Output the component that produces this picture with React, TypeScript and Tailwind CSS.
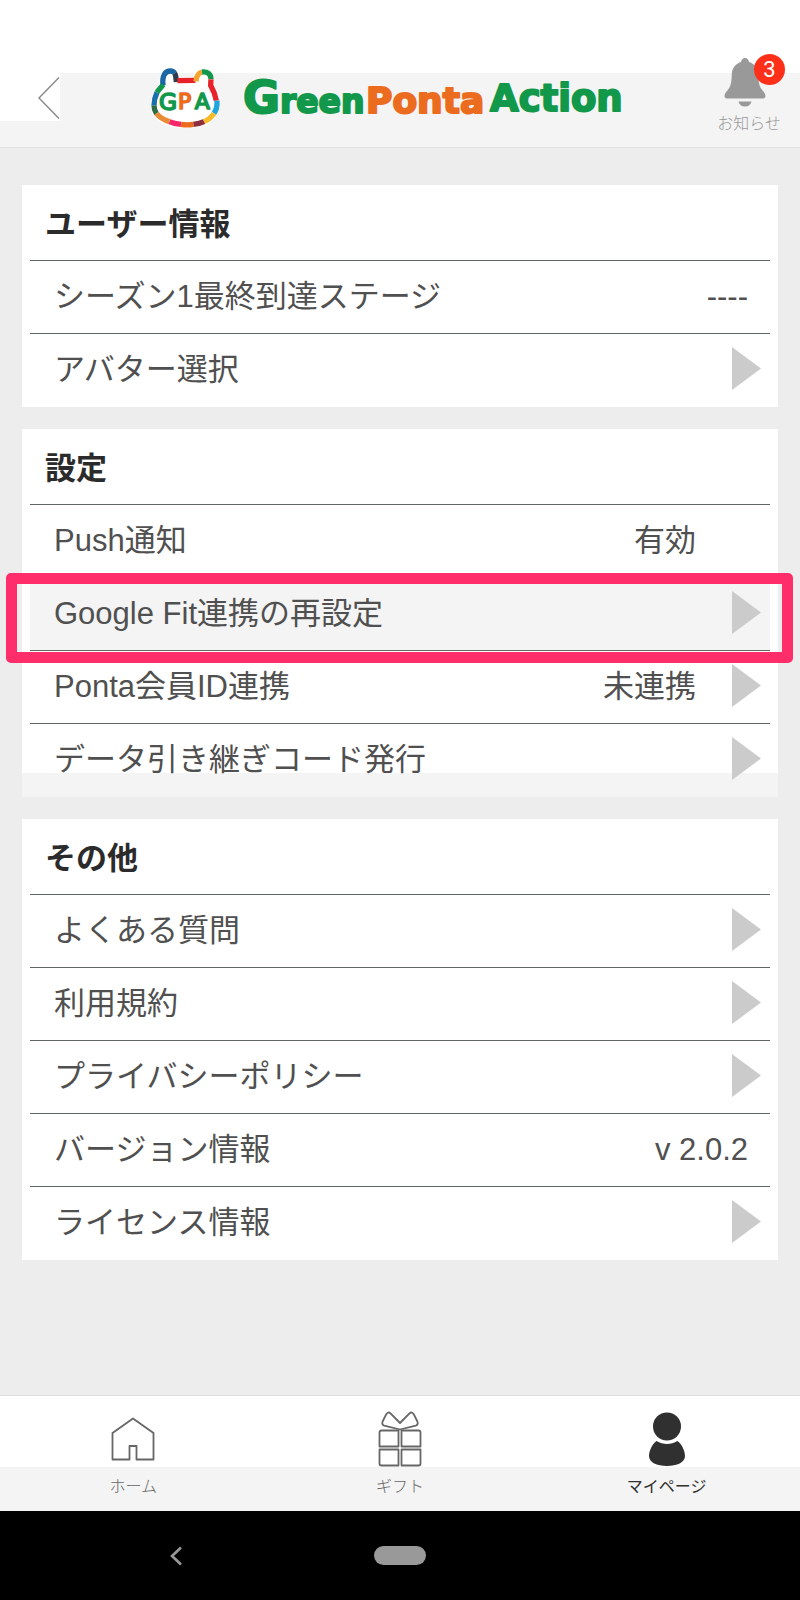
import type { ReactNode } from 'react';

interface RowItem {
  label: string;
  value?: string;
  arrow?: boolean;
  // 矢印なしでも値の位置を矢印つきの行に揃える
  reserveArrow?: boolean;
  highlighted?: boolean;
  shaded?: boolean;
}

interface Section {
  title: string;
  rows: RowItem[];
}

const sections: Section[] = [
  {
    title: 'ユーザー情報',
    rows: [
      { label: 'シーズン1最終到達ステージ', value: '----' },
      { label: 'アバター選択', arrow: true },
    ],
  },
  {
    title: '設定',
    rows: [
      { label: 'Push通知', value: '有効', reserveArrow: true },
      { label: 'Google Fit連携の再設定', arrow: true, highlighted: true },
      { label: 'Ponta会員ID連携', value: '未連携', arrow: true },
      { label: 'データ引き継ぎコード発行', arrow: true, shaded: true },
    ],
  },
  {
    title: 'その他',
    rows: [
      { label: 'よくある質問', arrow: true },
      { label: '利用規約', arrow: true },
      { label: 'プライバシーポリシー', arrow: true },
      { label: 'バージョン情報', value: 'v 2.0.2' },
      { label: 'ライセンス情報', arrow: true },
    ],
  },
];

export default function App() {
  return (
    <div className="flex min-h-screen flex-col bg-[#ededed] font-['Liberation_Sans','Noto_Sans_CJK_JP',sans-serif] text-[#505050]">
      <Header />
      <main className="flex flex-1 flex-col gap-[22px] px-[22px] pt-[37px] pb-8">
        {sections.map((section) => (
          <SettingsCard key={section.title} section={section} />
        ))}
      </main>
      <TabBar />
      <SystemBar />
    </div>
  );
}

function Header() {
  return (
    <header className="flex h-[148px] items-start justify-between border-b border-[#e0e0e0] bg-linear-to-b from-white from-50% to-[#f4f4f4] to-50%">
      <button aria-label="戻る" className="flex h-[121px] w-[60px] items-end justify-end bg-white pb-[2px]">
        <svg width="22" height="42" viewBox="0 0 22 42" fill="none" stroke="#8c8c8c" strokeWidth="1.5">
          <path d="M21 0.5 L1 21 L21 41.5" />
        </svg>
      </button>
      <h1 className="flex items-start gap-[14px] pt-[60px] pl-2">
        <BearLogo />
        <WordMark />
      </h1>
      <button className="flex w-[102px] flex-col items-center pt-[58px] text-[#999999]">
        <span className="relative mr-2">
          <svg width="42" height="49" viewBox="0 0 42 49" fill="#999999">
            <path d="M21 0 C23 0 24.4 1.6 25 4 C31 6 34 10.5 34.2 16.5 C34.4 25 35.4 29 38.6 32.4 C40.6 34.6 41.5 36 41.5 38 C41.5 39.8 40 40.6 38 40.6 H4 C2 40.6 0.5 39.8 0.5 38 C0.5 36 1.4 34.6 3.4 32.4 C6.6 29 7.6 25 7.8 16.5 C8 10.5 11 6 17 4 C17.6 1.6 19 0 21 0 Z" />
            <path d="M14.5 43.5 H27.5 C26.8 46.5 24.6 48.5 21 48.5 C17.4 48.5 15.2 46.5 14.5 43.5 Z" />
          </svg>
          <span className="absolute -top-1 left-[30px] flex h-[31px] w-[31px] items-center justify-center rounded-full bg-[#ff3019] font-[Roboto,sans-serif] text-[22px] leading-none text-white">
            3
          </span>
        </span>
        <span className="mt-[7px] text-base leading-5 font-light">お知らせ</span>
      </button>
    </header>
  );
}

// 輪郭の色分け(左耳から時計回り)
const bearOutline = [
  { d: 'M69 76 C66 48 74 33 92 33 C97 33 101 35 104 40', color: '#1b68a5' },
  { d: 'M104 40 C108 46 108 54 109 66', color: '#2b3b50' },
  { d: 'M112 62 L166 61', color: '#e8222a' },
  { d: 'M168 64 C169 48 174 39 186 36', color: '#f2a52f' },
  { d: 'M186 36 C203 34 213 43 213 58', color: '#12984a' },
  { d: 'M213 58 L212 76 C220 90 226 104 229 122', color: '#e8222a' },
  { d: 'M231 122 C232 138 230 149 222 160', color: '#20a5dd' },
  { d: 'M222 160 C215 171 206 179 192 185', color: '#f8bb2c' },
  { d: 'M192 185 C182 190 173 192 160 193', color: '#8e2f3f' },
  { d: 'M160 193 C148 195 136 195 123 193', color: '#ec6c1f' },
  { d: 'M123 193 C110 192 99 190 88 185', color: '#f5266c' },
  { d: 'M88 185 C72 180 58 171 49 160', color: '#e98a34' },
  { d: 'M49 160 C44 153 42 146 42 136', color: '#2f6b45' },
  { d: 'M42 136 C42 122 46 108 51 97', color: '#1a6fae' },
  { d: 'M51 97 C56 88 65 82 69 74', color: '#12984a' },
];

function BearLogo() {
  return (
    <svg width="90" height="75" viewBox="0 0 270 225" role="img" aria-label="GPA">
      <path
        d="M69 76 C66 48 74 33 92 33 C106 33 108 50 109 64 L168 62 C169 44 176 36 190 36 C212 36 216 55 212 76 C224 96 231 112 231 130 C231 178 185 195 140 195 C85 195 42 178 42 136 C42 110 50 90 69 76 Z"
        fill="#ffffff"
        stroke="#ffffff"
        strokeWidth="20"
      />
      {bearOutline.map((part) => (
        <path key={part.d} d={part.d} fill="none" stroke={part.color} strokeWidth="16" />
      ))}
      <g fontFamily="DejaVu Sans, sans-serif" fontSize="66" strokeWidth="5" strokeLinejoin="round">
        <text x="57" y="149" fontSize="70" fill="#12984a" stroke="#12984a">G</text>
        <text x="114" y="146" fill="#ec6c1f" stroke="#ec6c1f">P</text>
        <text x="164" y="146" fill="#12984a" stroke="#12984a">A</text>
      </g>
    </svg>
  );
}

function WordMark() {
  return (
    <svg width="382" height="75" viewBox="0 0 382 75" strokeLinejoin="round" role="img" aria-label="GreenPontaAction">
      <g fontFamily="DejaVu Sans, sans-serif" fontWeight="700" fontSize="36" strokeWidth="2">
        <text x="-1" y="53" fontSize="33" fill="#12984a" stroke="#12984a"><tspan fontSize="45">G</tspan>reen</text>
        <text x="122" y="53" fill="#ec6c1f" stroke="#ec6c1f">Ponta</text>
        <text x="246" y="51" fontSize="37" fill="#12984a" stroke="#12984a">Action</text>
      </g>
    </svg>
  );
}

function SettingsCard({ section }: { section: Section }) {
  return (
    <section className="bg-white px-2 pb-px">
      <h2 className="flex h-[75px] items-center px-[15px] pt-1 text-[31px] leading-10 font-bold text-[#2b2b2b]">
        {section.title}
      </h2>
      <ul>
        {section.rows.map((row) => (
          <SettingsRow key={row.label} row={row} />
        ))}
      </ul>
    </section>
  );
}

function SettingsRow({ row }: { row: RowItem }) {
  const content = (
    <>
      <span className="flex-1 text-left">{row.label}</span>
      {row.value && <span>{row.value}</span>}
      {row.arrow && <Arrow />}
      {row.reserveArrow && <span className="ml-9 w-[29px]" />}
    </>
  );
  const base = 'flex h-[72px] w-full items-center pl-6 text-[31px] leading-10';
  const padding = row.arrow || row.reserveArrow ? 'pr-[9px]' : 'pr-[22px]';

  return (
    <li className="relative border-t border-[#5f6661]">
      {row.shaded && <div className="absolute -inset-x-2 -bottom-px h-6 bg-[#f4f4f4]" />}
      {row.arrow ? (
        <button className={`${base} ${padding} relative ${row.highlighted ? 'bg-[#f4f4f4]' : ''}`}>{content}</button>
      ) : (
        <div className={`${base} ${padding}`}>{content}</div>
      )}
      {row.highlighted && (
        <div className="pointer-events-none absolute -top-[5px] -right-[23px] -bottom-[13px] -left-6 z-10 rounded-[5px] border-[11px] border-[#ff2e6b]" />
      )}
    </li>
  );
}

function Arrow() {
  return (
    <svg className="mb-1 ml-9 shrink-0" width="29" height="43" viewBox="0 0 29 43" fill="#cbcbcb">
      <path d="M0 0 L29 21.5 L0 43 Z" />
    </svg>
  );
}

function TabBar() {
  return (
    <nav className="grid h-[116px] grid-cols-3 border-t border-[#dcdcdc] bg-linear-to-b from-white from-62% to-[#f4f4f4] to-62% text-[#666666]">
      <Tab label="ホーム">
        <svg width="44" height="56" viewBox="0 0 44 56" fill="none" stroke="#666666" strokeWidth="1.8" strokeLinejoin="round">
          <path d="M22 7.5 L42.5 22 V48.5 H25.5 V35 H18.5 V48.5 H1.5 V22 Z" />
        </svg>
      </Tab>
      <Tab label="ギフト">
        <svg width="44" height="56" viewBox="0 0 44 56" fill="none" stroke="#666666" strokeWidth="1.8" strokeLinejoin="round">
          <path d="M22 18.5 L6.2 14.6 C4.4 14 3.8 12.6 4.6 10.5 L8.3 3.2 C9.4 1.2 11 1 12.5 2.4 L22 12 L31.5 2.4 C33 1 34.6 1.2 35.7 3.2 L39.4 10.5 C40.2 12.6 39.6 14 37.8 14.6 Z" />
          <path d="M20.5 19.5 H3.5 Q1.5 19.5 1.5 21.5 V35.5 H20.5 Z" />
          <path d="M23.5 19.5 H40.5 Q42.5 19.5 42.5 21.5 V35.5 H23.5 Z" />
          <path d="M20.5 38.5 H1.5 V52.5 Q1.5 54.5 3.5 54.5 H20.5 Z" />
          <path d="M23.5 38.5 H42.5 V52.5 Q42.5 54.5 40.5 54.5 H23.5 Z" />
        </svg>
      </Tab>
      <Tab label="マイページ" active>
        <svg width="44" height="56" viewBox="0 0 44 56" fill="#303030">
          <circle cx="22" cy="15.5" r="14" />
          <path d="M11.5 30 C18 34 26 34 32.5 30 C36.5 33 40 39.5 40 45 C40 51.5 32 55 22 55 C12 55 4 51.5 4 45 C4 39.5 7.5 33 11.5 30 Z" />
        </svg>
      </Tab>
    </nav>
  );
}

function Tab({ label, active, children }: { label: string; active?: boolean; children: ReactNode }) {
  return (
    <a href="#" aria-current={active ? 'page' : undefined} className="flex flex-col items-center pt-[15px]">
      {children}
      <span className={`mt-[10px] text-base leading-5 ${active ? 'text-[#303030]' : 'font-light'}`}>{label}</span>
    </a>
  );
}

function SystemBar() {
  return (
    <div className="grid h-[89px] grid-cols-[1fr_52px_1fr] items-center bg-black">
      <button aria-label="戻る" className="mr-48 justify-self-end">
        <svg width="12" height="20" viewBox="0 0 12 20" fill="none" stroke="#999999" strokeWidth="2.6">
          <path d="M11 1.5 L2 10 L11 18.5" />
        </svg>
      </button>
      <button aria-label="ホーム画面" className="h-[19px] rounded-full bg-[#999999]" />
    </div>
  );
}
